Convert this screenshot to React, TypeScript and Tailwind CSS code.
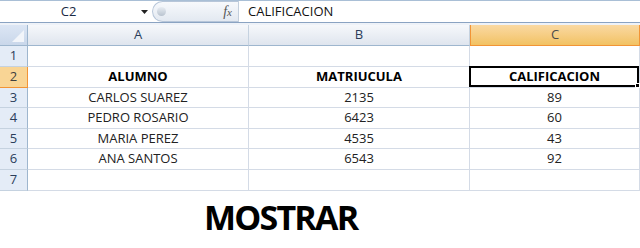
import React from 'react';

const rows: { h: string; cells: string[]; bold?: boolean }[] = [
  { h: 'h-[21px]', cells: ['', '', ''] },
  { h: 'h-[21px]', cells: ['ALUMNO', 'MATRIUCULA', 'CALIFICACION'], bold: true },
  { h: 'h-[20px]', cells: ['CARLOS SUAREZ', '2135', '89'] },
  { h: 'h-[21px]', cells: ['PEDRO ROSARIO', '6423', '60'] },
  { h: 'h-[20px]', cells: ['MARIA PEREZ', '4535', '43'] },
  { h: 'h-[21px]', cells: ['ANA SANTOS', '6543', '92'] },
  { h: 'h-[21px]', cells: ['', '', ''] },
];

const cols = ['A', 'B', 'C'];

export default function App() {
  return (
    <div className="w-[640px] h-[248px] overflow-hidden bg-white text-[#1b1b1b] font-['Open_Sans',sans-serif]">
      {/* formula bar */}
      <div className="flex h-[23px] items-center border-t border-b border-t-[#a9bfd6] border-b-[#8aa3c2] bg-white">
        <div className="w-[137px] text-center text-[13px] text-[#1a2a44]">C2</div>
        <div className="flex w-[15px] justify-center">
          <svg width="7" height="4" viewBox="0 0 7 4"><path d="M0 0h7L3.5 4z" fill="#222" /></svg>
        </div>
        <div className="flex h-[21px] w-[86px] items-center justify-between rounded-l-full border border-r-0 border-[#b7c6d9] bg-gradient-to-b from-[#f7f9fc] to-[#e3e9f1] pl-[4px] pr-[6px]">
          <div className="h-[9px] w-[9px] rounded-full bg-gradient-to-b from-[#e8edf3] to-[#b9c3cf]" />
          <span className="font-['Liberation_Serif',serif] text-[14px] italic text-[#555]">f<span className="text-[11px]">x</span></span>
        </div>
        <div className="h-full w-px bg-[#c3cfdd]" />
        <div className="pl-[9px] text-[13px] text-[#111]">CALIFICACION</div>
      </div>
      <div className="h-[2px] bg-[#eef2f8]" />
      {/* grid */}
      <div className="grid grid-cols-[28px_221px_221px_170px]">
        <div className="relative h-[21px] border-r border-b border-[#9eb6ce] bg-gradient-to-b from-[#dce6f4] to-[#c9d7ea]">
          <svg className="absolute bottom-[3px] right-[3px]" width="12" height="12" viewBox="0 0 12 12"><path d="M12 0v12H0z" fill="#f2f5fa" /></svg>
        </div>
        {cols.map((c) =>
          c === 'C' ? (
            <div key={c} className="flex h-[21px] items-center justify-center border border-t-0 border-[#f29436] bg-gradient-to-b from-[#fad9a2] to-[#f2c262] text-[13px] text-[#4b4b4b]">
              {c}
            </div>
          ) : (
            <div key={c} className="flex h-[21px] items-center justify-center border-r border-b border-r-[#c5d2e0] border-b-[#9eb6ce] bg-gradient-to-b from-[#f6f8fb] to-[#dfe5ee] text-[13px] text-[#2b3d5a]">
              {c}
            </div>
          )
        )}
        {rows.map((r, i) => (
          <React.Fragment key={i}>
            <div
              className={
                i === 1
                  ? `${r.h} flex items-center justify-center border-r border-b border-[#f29436] bg-[#f9d595] text-[13px] text-[#404040]`
                  : `${r.h} flex items-center justify-center border-r border-b border-r-[#9eb6ce] border-b-[#c5d2e0] bg-[#e4ecf7] text-[13px] text-[#2b3d5a]`
              }
            >
              {i + 1}
            </div>
            {r.cells.map((t, j) => (
              <div
                key={j}
                className={`${r.h} relative flex items-center justify-center border-r border-b border-[#d4dbe6] text-[13px] ${r.bold ? 'font-bold text-black' : 'text-[#222]'}`}
              >
                {i === 1 && j === 2 && (
                  <div className="absolute -top-px -left-px right-0 bottom-0 border-2 border-black">
                    <div className="absolute -bottom-[3px] -right-[3px] h-[5px] w-[5px] border border-white bg-black" />
                  </div>
                )}
                {t}
              </div>
            ))}
          </React.Fragment>
        ))}
      </div>
      <div className="flex pt-[9px] pl-[204px]">
        <span className="text-[34px] font-bold leading-none tracking-[-1.8px] text-black">MOSTRAR</span>
      </div>
    </div>
  );
}
